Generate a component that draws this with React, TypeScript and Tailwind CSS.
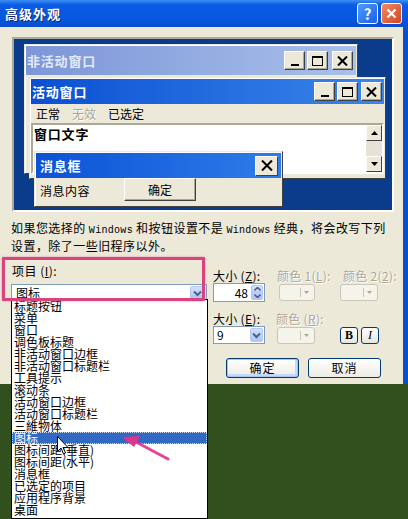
import React from "react";

const items = [
  "标题按钮",
  "菜单",
  "窗口",
  "调色板标题",
  "非活动窗口边框",
  "非活动窗口标题栏",
  "工具提示",
  "滚动条",
  "活动窗口边框",
  "活动窗口标题栏",
  "三維物体",
  "图标",
  "图标间距(垂直)",
  "图标间距(水平)",
  "消息框",
  "已选定的项目",
  "应用程序背景",
  "桌面",
];

function Chevron() {
  return (
    <svg width="9" height="7" viewBox="0 0 9 7">
      <path d="M1 1.5 L4.5 5 L8 1.5" fill="none" stroke="#4d6185" strokeWidth="2" />
    </svg>
  );
}

function XpArrow({ className = "" }: { className?: string }) {
  return (
    <div
      className={`flex items-center justify-center rounded-[2px] border border-[#b5c8f3] bg-gradient-to-b from-[#d3e0fd] to-[#aec4f4] ${className}`}
    >
      <Chevron />
    </div>
  );
}

function CaptionBtn({ kind }: { kind: "min" | "max" | "close" }) {
  return (
    <div className="flex h-[19px] w-[21px] items-center justify-center border border-t-white border-l-white border-b-[#404040] border-r-[#404040] bg-[#ece9d8] shadow-[inset_-1px_-1px_0_#aca899]">
      {kind === "min" && <div className="mt-[9px] h-[2px] w-[8px] bg-black" />}
      {kind === "max" && <div className="h-[10px] w-[11px] border border-t-2 border-black" />}
      {kind === "close" && (
        <svg width="11" height="10" viewBox="0 0 11 10">
          <path d="M1 0.5 L10 9.5 M10 0.5 L1 9.5" stroke="#000" strokeWidth="2" />
        </svg>
      )}
    </div>
  );
}

function ColorBtn({ w }: { w: string }) {
  return (
    <div className={`flex h-[17px] ${w} items-center justify-end rounded-[3px] border border-[#c9c7ba] bg-[#f5f4ea] pr-[5px]`}>
      <div className="mr-[3px] h-[9px] w-px bg-[#c9c7ba]" />
      <svg width="5" height="3" viewBox="0 0 5 3">
        <path d="M0 0 H5 L2.5 3 Z" fill="#aca899" />
      </svg>
    </div>
  );
}

function Preview() {
  return (
    <div className="relative ml-[1px] h-[175px] w-[382px] border-2 border-t-[#aca899] border-l-[#aca899] border-b-white border-r-white bg-[#0b3c8c] font-bold">
      {/* inactive window */}
      <div className="absolute left-[10px] top-[5px] h-[130px] w-[334px] border border-t-[#ece9d8] border-l-[#ece9d8] border-b-[#404040] border-r-[#404040] bg-[#ece9d8] p-[1px] shadow-[inset_1px_1px_0_#fff]">
        <div className="flex h-[29px] items-center justify-between bg-gradient-to-r from-[#7c96d8] to-[#a9c0ea] pl-[1px] pr-[3px]">
          <span className="text-[13px] tracking-[0.8px] text-[#e3e9f7]">非活动窗口</span>
          <div className="flex items-center">
            <CaptionBtn kind="min" />
            <div className="ml-[2px]">
              <CaptionBtn kind="max" />
            </div>
            <div className="ml-[4px]">
              <CaptionBtn kind="close" />
            </div>
          </div>
        </div>
      </div>

      {/* active window */}
      <div className="absolute left-[15px] top-[38px] flex h-[102px] w-[357px] flex-col border border-t-[#ece9d8] border-l-[#ece9d8] border-b-[#404040] border-r-[#404040] bg-[#ece9d8] p-[1px] shadow-[inset_1px_1px_0_#fff]">
        <div className="flex h-[25px] items-center justify-between bg-gradient-to-r from-[#0b4fd2] to-[#3a86ea] pl-[1px] pr-[2px]">
          <span className="text-[13px] tracking-[0.8px] text-white">活动窗口</span>
          <div className="flex items-center">
            <CaptionBtn kind="min" />
            <div className="ml-[2px]">
              <CaptionBtn kind="max" />
            </div>
            <div className="ml-[3px]">
              <CaptionBtn kind="close" />
            </div>
          </div>
        </div>
        <div className="flex h-[19px] items-center gap-[12px] pl-[5px] text-[12px] font-normal">
          <span>正常</span>
          <span className="text-[#aca899] [text-shadow:1px_1px_0_#fff]">无效</span>
          <span>已选定</span>
        </div>
        <div className="flex h-[51px] border-2 border-t-[#aca899] border-l-[#aca899] border-b-white border-r-white bg-white">
          <div className="flex-1 pl-[1px] pt-[1px] text-[13px] leading-[15px] tracking-[0.8px]">窗口文字</div>
          <div className="flex w-[16px] flex-col bg-[#e6e3d6]">
            <div className="flex h-[16px] items-center justify-center border border-t-white border-l-white border-b-[#404040] border-r-[#404040] bg-[#ece9d8]">
              <svg width="7" height="4" viewBox="0 0 7 4">
                <path d="M0 4 L3.5 0 L7 4 Z" fill="#000" />
              </svg>
            </div>
            <div className="flex-1" />
            <div className="flex h-[16px] items-center justify-center border border-t-white border-l-white border-b-[#404040] border-r-[#404040] bg-[#ece9d8]">
              <svg width="7" height="4" viewBox="0 0 7 4">
                <path d="M0 0 L3.5 4 L7 0 Z" fill="#000" />
              </svg>
            </div>
          </div>
        </div>
      </div>

      {/* message box */}
      <div className="absolute left-[20px] top-[112px] flex h-[56px] w-[249px] flex-col border border-t-[#ece9d8] border-l-[#ece9d8] border-b-[#404040] border-r-[#404040] bg-[#ece9d8] p-[1px] shadow-[inset_1px_1px_0_#fff]">
        <div className="flex h-[25px] items-center justify-between bg-gradient-to-r from-[#0b52d6] to-[#2f7ce8] pl-[4px] pr-[3px]">
          <span className="text-[13px] tracking-[0.8px] text-white">消息框</span>
          <div className="flex h-[20px] w-[23px] items-center justify-center border border-t-white border-l-white border-b-[#404040] border-r-[#404040] bg-[#ece9d8]">
            <svg width="12" height="11" viewBox="0 0 12 11">
              <path d="M1 0.5 L11 10.5 M11 0.5 L1 10.5" stroke="#000" strokeWidth="2" />
            </svg>
          </div>
        </div>
        <div className="flex flex-1 items-start pl-[4px] text-[12px] font-normal">
          <span className="mt-[4px] tracking-[0.5px]">消息内容</span>
          <div className="ml-[34px] flex h-[23px] w-[72px] items-center justify-center border border-t-white border-l-white border-b-[#404040] border-r-[#404040] shadow-[inset_-1px_-1px_0_#aca899]">
            确定
          </div>
        </div>
      </div>
    </div>
  );
}

export default function App() {
  const disabled = "text-[#aca899] [text-shadow:1px_1px_0_#fff]";
  return (
    <div className="relative h-[519px] w-[408px] overflow-hidden bg-[#32501d] font-['Noto_Sans_CJK_SC','Noto_Sans',sans-serif] text-black">
      {/* dialog window */}
      <div className="flex h-[384px] w-[408px] flex-col">
        <div className="flex h-[27px] items-center justify-between bg-[linear-gradient(to_bottom,#3d8ff5_0%,#0b5ce2_18%,#0656de_75%,#0a4ccc_100%)] pl-[5px] pr-[6px]">
          <span className="text-[13px] font-bold tracking-[1px] text-white [text-shadow:1px_1px_0_#0a246a]">高级外观</span>
          <div className="flex items-center gap-[3px]">
            <div className="flex h-[21px] w-[21px] items-center justify-center rounded-[3px] border border-white bg-gradient-to-br from-[#4e9bff] to-[#1a5ee8] text-[15px] font-bold leading-none text-white">
              ?
            </div>
            <div className="flex h-[21px] w-[21px] items-center justify-center rounded-[3px] border border-white bg-gradient-to-br from-[#f08a64] to-[#d3411c]">
              <svg width="11" height="11" viewBox="0 0 11 11">
                <path d="M1.5 1.5 L9.5 9.5 M9.5 1.5 L1.5 9.5" stroke="#fff" strokeWidth="2.2" />
              </svg>
            </div>
          </div>
        </div>

        <div className="flex flex-1 border-r-[5px] border-r-[#0a4fd0]">
          <div className="flex flex-1 flex-col bg-[#ece9d8] pl-[11px] pt-[10px]">
            <Preview />

            <p className="mt-[8px] text-[12px] leading-[15px] tracking-[0.45px]">
              如果您选择的 <span className="font-['Liberation_Mono',monospace] text-[10px] tracking-[0.3px]">Windows</span>{" "}
              和按钮设置不是 <span className="font-['Liberation_Mono',monospace] text-[10px] tracking-[0.3px]">Windows</span>{" "}
              经典，将会改写下列
              <br />
              设置，除了一些旧程序以外。
            </p>

            <div className="mt-[11px] flex text-[12px]">
              {/* item */}
              <div className="w-[196px]">
                <div className="h-[14px] pl-[1px] leading-[14px] tracking-[0.5px]">
                  项目 (<u>I</u>):
                </div>
                <div className="mt-[6px] flex h-[18px] items-center border border-[#7f9db9] bg-white pr-[1px]">
                  <span className="flex-1 pl-[4px] leading-[14px]">图标</span>
                  <XpArrow className="h-[14px] w-[15px]" />
                </div>
              </div>

              {/* right side */}
              <div className="ml-[6px] pt-[6px]">
                <div className="flex h-[12px] leading-[12px] tracking-[0.3px]">
                  <span className="w-[64px]">
                    大小 (<u>Z</u>):
                  </span>
                  <span className={`w-[66px] ${disabled}`}>
                    颜色 1(<u>L</u>):
                  </span>
                  <span className={disabled}>
                    颜色 2(<u>2</u>):
                  </span>
                </div>
                <div className="mt-[1px] flex h-[19px] items-center">
                  <div className="flex h-[19px] w-[52px] items-center border border-[#7f9db9] bg-white pr-[1px]">
                    <span className="flex-1 pr-[3px] text-right">48</span>
                    <div className="flex h-[15px] w-[12px] flex-col overflow-hidden rounded-[2px] border border-[#b5c8f3] bg-gradient-to-b from-[#d3e0fd] to-[#aec4f4]">
                      <div className="flex flex-1 items-center justify-center">
                        <svg width="7" height="4" viewBox="0 0 7 4">
                          <path d="M0.5 3.5 L3.5 0.5 L6.5 3.5" fill="none" stroke="#4d6185" strokeWidth="1.6" />
                        </svg>
                      </div>
                      <div className="flex flex-1 items-center justify-center border-t border-[#b5c8f3]">
                        <svg width="7" height="4" viewBox="0 0 7 4">
                          <path d="M0.5 0.5 L3.5 3.5 L6.5 0.5" fill="none" stroke="#4d6185" strokeWidth="1.6" />
                        </svg>
                      </div>
                    </div>
                  </div>
                  <div className="ml-[14px]">
                    <ColorBtn w="w-[36px]" />
                  </div>
                  <div className="ml-[25px]">
                    <ColorBtn w="w-[38px]" />
                  </div>
                </div>

                <div className="mt-[10px] flex h-[13px] leading-[13px] tracking-[0.3px]">
                  <span className="w-[63px]">
                    大小 (<u>E</u>):
                  </span>
                  <span className={disabled}>
                    颜色 (<u>R</u>):
                  </span>
                </div>
                <div className="mt-[1px] flex h-[18px] items-center">
                  <div className="flex h-[18px] w-[52px] items-center border border-[#7f9db9] bg-white pr-[1px]">
                    <span className="flex-1 pl-[3px]">9</span>
                    <XpArrow className="h-[14px] w-[13px]" />
                  </div>
                  <div className="ml-[12px]">
                    <ColorBtn w="w-[38px]" />
                  </div>
                  <div className="ml-[25px] flex h-[17px] w-[18px] items-center justify-center rounded-[3px] border border-[#003c74] bg-gradient-to-b from-white to-[#e6e5dd] font-['Liberation_Serif',serif] text-[12px] font-bold">
                    B
                  </div>
                  <div className="ml-[3px] flex h-[17px] w-[18px] items-center justify-center rounded-[3px] border border-[#003c74] bg-gradient-to-b from-white to-[#e6e5dd] font-['Liberation_Serif',serif] text-[12px] italic">
                    I
                  </div>
                </div>

                <div className="mt-[14px] flex">
                  <div className="ml-[13px] flex h-[20px] w-[73px] items-center justify-center rounded-[3px] border border-[#003c74] bg-gradient-to-b from-white to-[#ecebe6] shadow-[inset_0_0_0_1px_#a9c3f2,inset_-1px_-1px_0_2px_#c8d8f8] tracking-[1px]">
                    确定
                  </div>
                  <div className="ml-[9px] flex h-[20px] w-[73px] items-center justify-center rounded-[3px] border border-[#003c74] bg-gradient-to-b from-white to-[#ecebe6] tracking-[1px]">
                    取消
                  </div>
                </div>
              </div>
            </div>
          </div>
        </div>
      </div>

      {/* open dropdown list */}
      <div className="absolute left-[11px] top-[299px] h-[220px] w-[197px] border border-black bg-white text-[12px] leading-[12px]">
        {items.map((it) =>
          it === "图标" ? (
            <div key={it} className="h-[12px] bg-[#316ac5] pl-[2px] text-white outline-1 outline-dotted outline-offset-[-1px] outline-[#cfdcf2]">
              {it}
            </div>
          ) : (
            <div key={it} className="h-[12px] pl-[2px]">
              {it}
            </div>
          )
        )}
      </div>

      {/* highlight box */}
      <div className="absolute left-[2px] top-[257px] h-[44px] w-[203px] rounded-[1px] border-[3px] border-[#d9437f] shadow-[0_0_2px_#e07aa5]" />

      {/* mouse cursor */}
      <svg className="absolute left-[57px] top-[436px]" width="12" height="19" viewBox="0 0 12 19">
        <path d="M0.5 0.5 L0.5 15.5 L4 12 L6.5 18 L8.5 17 L6 11.5 L11 11.5 Z" fill="#fff" stroke="#000" strokeWidth="1" />
      </svg>

      {/* pink arrow */}
      <svg className="absolute left-[118px] top-[430px]" width="56" height="34" viewBox="0 0 56 34">
        <path d="M50 29 L18 12" stroke="#e0338c" strokeWidth="3" strokeLinecap="round" opacity="0.9" />
        <path d="M4 7 L22 6 L16 17 Z" fill="#e0338c" />
      </svg>
    </div>
  );
}
